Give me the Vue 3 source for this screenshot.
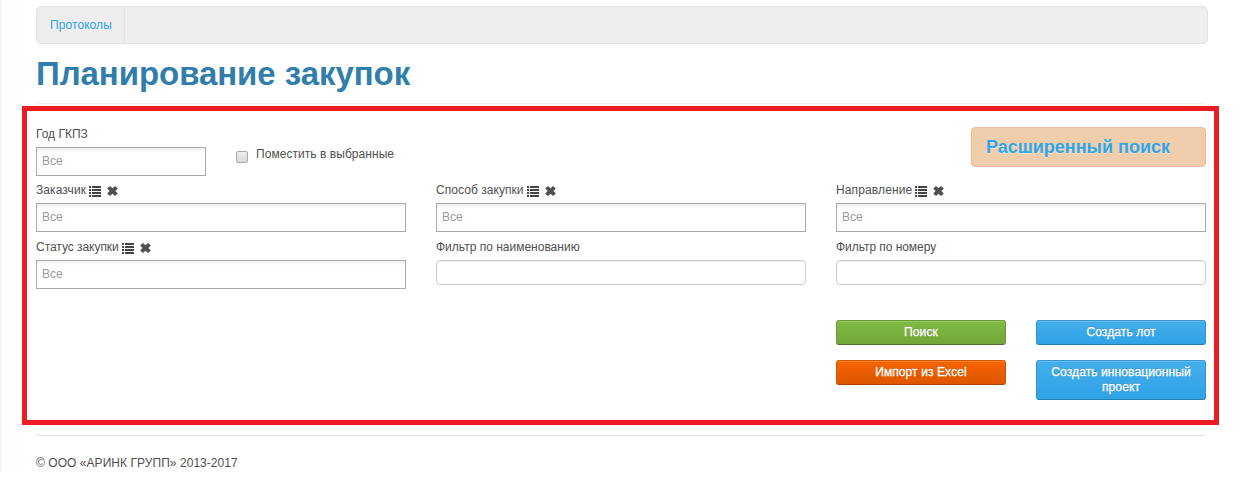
<script setup>
const filters = [
  { label: 'Заказчик', icons: true, tracking: 0.1 },
  { label: 'Способ закупки', icons: true, tracking: 0.05 },
  { label: 'Направление', icons: true, tracking: 0.12 },
  { label: 'Статус закупки', icons: true, tracking: -0.04 },
  { label: 'Фильтр по наименованию', icons: false, tracking: 0 },
  { label: 'Фильтр по номеру', icons: false, tracking: -0.05 },
]
</script>

<template>
  <div class="page">
    <nav class="navbar"><a class="nav-link">Протоколы</a></nav>
    <h1 class="title">Планирование закупок</h1>
    <div class="title-rule"></div>

    <section class="panel">
      <div class="top">
        <div class="year">
          <div class="label">Год ГКПЗ</div>
          <input class="select" placeholder="Все" />
        </div>
        <label class="check"><span class="box"></span><span>Поместить в выбранные</span></label>
        <a class="advanced">Расширенный поиск</a>
      </div>

      <div class="filters">
        <div v-for="f in filters" :key="f.label" class="field">
          <div class="label">
            <span :style="{ letterSpacing: f.tracking + 'px' }">{{ f.label }}</span>
            <template v-if="f.icons">
              <svg class="list" width="12" height="11" viewBox="0 0 12 11" shape-rendering="crispEdges">
                <path fill="#444" d="M0 0h2v2H0zM3 0h9v2H3zM0 3h2v2H0zM3 3h9v2H3zM0 6h2v2H0zM3 6h9v2H3zM0 9h2v2H0zM3 9h9v2H3z" />
              </svg>
              <svg class="cross" width="11" height="10" viewBox="0 0 11 10">
                <path fill="#505050" d="M3 0 5.5 2.2 8 0 10.8 2.6 8.4 5 10.8 7.4 8 10 5.5 7.8 3 10 .2 7.4 2.6 5 .2 2.6z" />
              </svg>
            </template>
          </div>
          <input v-if="f.icons" class="select" placeholder="Все" />
          <input v-else class="text" />
        </div>
      </div>

      <div class="actions">
        <button class="btn green">Поиск</button>
        <button class="btn blue">Создать лот</button>
        <button class="btn orange">Импорт из Excel</button>
        <button class="btn blue">Создать инновационный проект</button>
      </div>
    </section>

    <footer class="footer">© ООО «АРИНК ГРУПП» 2013-2017</footer>
  </div>
</template>

<style>
body {
  background: #fff;
}
</style>

<style scoped>
.page {
  box-sizing: border-box;
  width: 1245px;
  height: 493px;
  padding: 6px 0 0 22px;
  overflow: hidden;
  background: linear-gradient(#e5f4ff, #e5f4ff) 0 0 / 1px 472px no-repeat #fff;
  font: 12px/20px "Liberation Sans", Arial, sans-serif;
  color: #505050;
}
.navbar {
  box-sizing: border-box;
  width: 1172px;
  height: 38px;
  margin-left: 14px;
  display: flex;
  background: #eee;
  border: 1px solid #e3e3e3;
  border-radius: 5px;
}
.nav-link {
  box-sizing: border-box;
  width: 88px;
  padding: 8px 0 0 13px;
  border-right: 1px solid #e2e2e2;
  color: #2fa4e7;
  letter-spacing: 0.08px;
}
.title {
  height: 59px;
  margin: 0 0 0 14px;
  font-size: 33px;
  line-height: 59px;
  font-weight: bold;
  letter-spacing: -0.06px;
  color: #317eac;
  white-space: nowrap;
}
.title-rule {
  width: 1170px;
  height: 1px;
  margin-left: 14px;
  background: #f0f0f0;
}
.panel {
  box-sizing: border-box;
  width: 1197px;
  height: 319px;
  margin-top: 2px;
  padding: 13px 8px 0 9px;
  border: 5px solid #ed1c24;
}
.top {
  display: flex;
  height: 56px;
}
.year {
  width: 170px;
}
.label {
  display: flex;
  align-items: center;
  height: 20px;
  margin-bottom: 3px;
  white-space: nowrap;
}
.list {
  margin: 3px 0 0 3px;
}
.cross {
  margin: 2px 0 0 6px;
}
.select,
.text {
  display: block;
  box-sizing: border-box;
  width: 100%;
  margin: 0;
  padding: 0 5px 2px;
  font: inherit;
  outline: 0;
}
.select {
  height: 29px;
  border: 1px solid #aaa;
  border-radius: 0;
  background: linear-gradient(#eee 1%, #fff 15%);
}
.select::placeholder {
  color: #999;
  opacity: 1;
}
.text {
  height: 25px;
  border: 1px solid #ccc;
  border-radius: 4px;
  background: #fff;
  box-shadow: inset 0 1px 1px rgba(0, 0, 0, 0.075);
}
.check {
  display: flex;
  align-items: flex-start;
  height: 20px;
  margin: 20px 0 0 30px;
  letter-spacing: 0.05px;
}
.box {
  box-sizing: border-box;
  width: 12px;
  height: 12px;
  margin: 7px 8px 0 0;
  border: 1px solid #a9a9a9;
  border-radius: 2px;
  background: linear-gradient(#eee, #d9d9d9);
}
.advanced {
  box-sizing: border-box;
  width: 235px;
  height: 40px;
  margin: 3px 0 0 auto;
  padding-left: 14px;
  border: 1px solid #f0b89c;
  border-radius: 4px;
  background: #f0ceac;
  font-size: 18px;
  line-height: 38px;
  font-weight: bold;
  color: #2fa4e7;
  text-shadow: 0 1px 0 rgba(255, 255, 255, 0.5);
  white-space: nowrap;
}
.filters {
  display: grid;
  grid-template-columns: repeat(3, 370px);
  grid-template-rows: 57px 83px;
  column-gap: 30px;
}
.actions {
  display: grid;
  grid-template-columns: 170px 170px;
  gap: 15px 30px;
  justify-content: end;
  align-items: start;
}
.btn {
  margin: 0;
  padding: 4px 8px;
  border: 1px solid;
  border-radius: 3px;
  font: 12px/15px "Liberation Sans", Arial, sans-serif;
  letter-spacing: 0.1px;
  color: #fff;
  -webkit-text-stroke: 0.3px #fff;
  text-shadow: 0 -1px 0 rgba(0, 0, 0, 0.25);
  box-shadow: inset 0 1px 0 rgba(255, 255, 255, 0.2);
}
.green {
  background: linear-gradient(#80bb42, #72a63a);
  border-color: #6a9c36 #6a9c36 #50752a;
}
.blue {
  background: linear-gradient(#44aeec, #2fa3e6);
  border-color: #3694cc #3694cc #2080b8;
}
.orange {
  background: linear-gradient(#f76400, #dd5600);
  border-color: #d45400 #d45400 #ae4300;
}
.footer {
  width: 1170px;
  margin: 10px 0 0 14px;
  padding-top: 17px;
  border-top: 1px solid #e3e3e3;
  letter-spacing: 0.05px;
}
</style>
